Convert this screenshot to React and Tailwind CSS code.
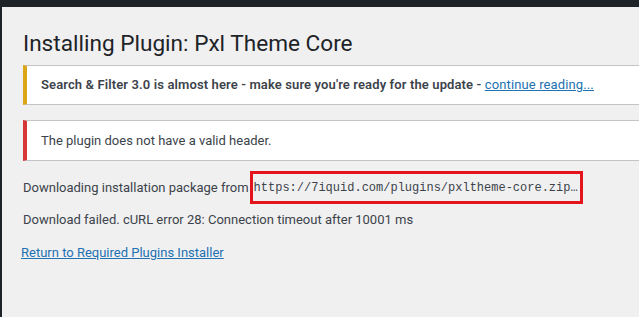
export default function App() {
  return (
    <div
      className="h-[317px] w-[639px] overflow-hidden bg-[#1d2327] flex flex-col"
      style={{ fontFamily: 'Roboto, "Noto Sans", sans-serif' }}
    >
      <div className="h-[7px] shrink-0" />
      <div className="flex-1 ml-[2px] bg-[#f0f0f1] pl-[21px] text-[13px] text-[#3c434a]">
        <h1 className="pt-[22px] text-[22.6px] leading-[30px] text-[#1d2327]">
          Installing Plugin: Pxl Theme Core
        </h1>
        <div className="mt-[6px] -mr-[10px] h-[40px] flex items-center bg-white border border-[#c3c4c7] border-l-4 border-l-[#dba617] pl-[14px]">
          <p className="font-semibold whitespace-nowrap tracking-[0.12px]">
            Search &amp; Filter 3.0 is almost here - make sure you're ready for the update -{" "}
            <a href="#" className="font-normal text-[#2271b1] underline">
              continue reading...
            </a>
          </p>
        </div>
        <div className="mt-[15px] -mr-[10px] h-[41px] flex items-center bg-white border border-[#c3c4c7] border-l-4 border-l-[#d63638] pl-[14px]">
          <p>The plugin does not have a valid header.</p>
        </div>
        <div className="mt-[10px] flex items-center h-[33px]">
          <span>Downloading installation package from</span>
          <span className="ml-[1px] flex items-center h-[33px] border-[3px] border-[#e3141b] pl-[1px] pr-[2px]">
            <code
              className="text-[12px] py-[2px] text-[#3c434a]"
              style={{ fontFamily: '"Liberation Mono", monospace' }}
            >
              https://7iquid.com/plugins/pxltheme-core.zip…
            </code>
          </span>
        </div>
        <p className="mt-[6px]">Download failed. cURL error 28: Connection timeout after 10001 ms</p>
        <p className="mt-[13px] -ml-[2px]">
          <a href="#" className="text-[#2271b1] underline">
            Return to Required Plugins Installer
          </a>
        </p>
      </div>
    </div>
  );
}
